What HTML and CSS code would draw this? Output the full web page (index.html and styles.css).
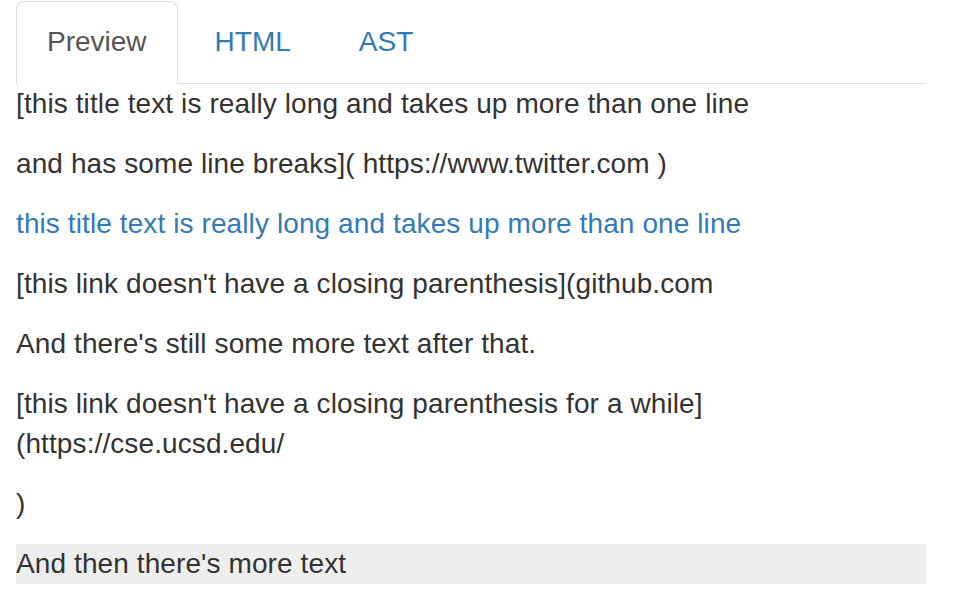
FILE: index.html
```html
<!DOCTYPE html>
<html>
<head>
<meta charset="utf-8">
<link rel="stylesheet" href="styles.css">
</head>
<body>
<div class="container">
  <ul class="tabs">
    <li class="tab active"><a>Preview</a></li>
    <li class="tab"><a>HTML</a></li>
    <li class="tab"><a>AST</a></li>
  </ul>
  <div class="preview">
    <p>[this title text is really long and takes up more than one line</p>
    <p>and has some line breaks]( https://www.twitter.com )</p>
    <p><a class="link">this title text is really long and takes up more than one line</a></p>
    <p>[this link doesn't have a closing parenthesis](github.com</p>
    <p>And there's still some more text after that.</p>
    <p>[this link doesn't have a closing parenthesis for a while]<br>(https://cse.ucsd.edu/</p>
    <p>)</p>
    <p class="hl">And then there's more text</p>
  </div>
</div>
</body>
</html>
```
FILE: styles.css
```css
html, body {
  margin: 0;
  padding: 0;
  background: #fff;
}
body {
  font-family: "Liberation Sans", Arial, sans-serif;
  font-size: 28px;
  line-height: 40px;
  color: #333;
}
.container {
  width: 910px;
  padding: 1px 0 0 16px;
}
.tabs {
  list-style: none;
  margin: 0;
  padding: 0;
  display: flex;
  border-bottom: 1px solid #ddd;
}
.tab {
  margin-bottom: -1px;
  margin-right: 6px;
}
.tab a {
  display: block;
  padding: 20px 30px 21px;
  border: 1px solid transparent;
  border-radius: 8px 8px 0 0;
  color: #337ab7;
}
.tab.active a {
  color: #555;
  background: #fff;
  border-color: #ddd;
  border-bottom-color: transparent;
}
.preview {
  letter-spacing: 0.1px;
}
.preview p {
  margin: 0 0 20px;
}
.link {
  color: #337ab7;
}
.hl {
  background: #eee;
}
```
